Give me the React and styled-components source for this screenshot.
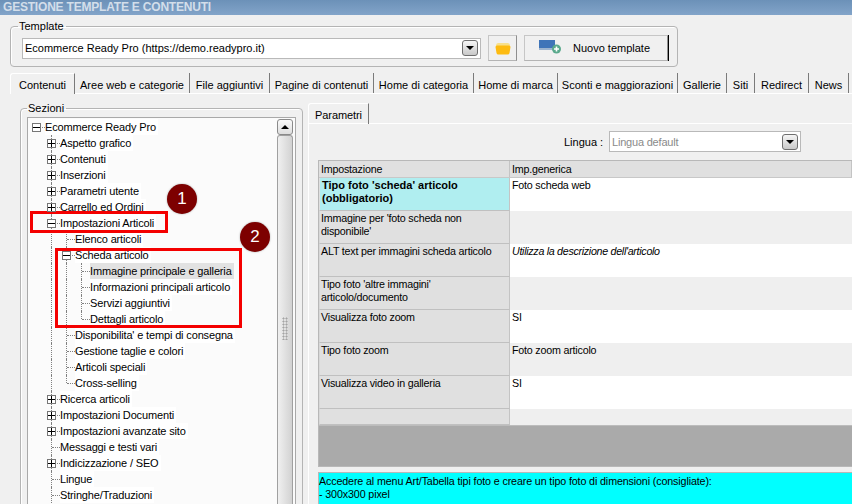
import React from 'react';
import styled, { createGlobalStyle } from 'styled-components';

const GlobalStyle = createGlobalStyle`
  html, body {
    margin: 0;
    padding: 0;
    background: #f0f0f0;
  }
  body {
    width: 852px;
    height: 504px;
    overflow: hidden;
    font-family: "Liberation Sans", Arial, sans-serif;
    font-size: 11px;
    color: #000;
  }
`;

const Page = styled.div`
  position: relative;
  width: 852px;
  height: 504px;
  overflow: hidden;
  display: flex;
  flex-direction: column;
`;

const TitleBar = styled.div`
  height: 15px;
  flex: none;
  padding-left: 3px;
  background: linear-gradient(#6c91b8, #82a4c9);
  color: #d3deea;
  font-weight: bold;
  font-size: 12px;
  line-height: 15px;
  letter-spacing: -0.2px;
  white-space: nowrap;
`;

const Group = styled.fieldset`
  margin: 0;
  min-width: 0;
  border: 1px solid #b4b4b4;
  border-radius: 4px;
  box-shadow: 1px 1px 0 #fff inset;
`;

const Legend = styled.legend`
  padding: 0 2px 0 1px;
  margin-left: ${p => p.$offset}px;
  line-height: 13px;
`;

const TemplateGroup = styled(Group)`
  width: 668px;
  height: 47px;
  box-sizing: border-box;
  margin: 5px 0 0 10px;
  padding: 2px 0 0 11px;
  flex: none;
`;

const TemplateRow = styled.div`
  display: flex;
  align-items: center;
  height: 26px;
`;

const ComboBox = styled.div`
  box-sizing: border-box;
  display: flex;
  align-items: center;
  justify-content: space-between;
  width: ${p => p.$width}px;
  height: ${p => p.$height}px;
  background: #fff;
  border: 1px solid #b9b9b9;
  padding: 0 2px 0 ${p => p.$pad}px;
  color: ${p => p.$muted ? '#8a8a8a' : '#000'};
  letter-spacing: ${p => p.$muted ? '-0.2px' : '0'};
  white-space: nowrap;
`;

const ComboButton = styled.span`
  box-sizing: border-box;
  width: 16px;
  height: 16px;
  flex: none;
  display: flex;
  align-items: center;
  justify-content: center;
  border: 1px solid #6f6f6f;
  border-radius: 3px;
  background: linear-gradient(#f6f6f6, #c9c9c9);
  &::after {
    content: '';
    border: 4px solid transparent;
    border-top: 4px solid #000;
    border-bottom: 0;
  }
`;

const ToolButton = styled.button`
  box-sizing: border-box;
  height: 26px;
  width: ${p => p.$width}px;
  margin-left: 7px;
  padding: 0;
  display: flex;
  align-items: center;
  justify-content: ${p => p.$text ? 'flex-start' : 'center'};
  background: #f0f0f0;
  font: inherit;
  color: #000;
  border: 1px solid #c6c6c6;
  border-right: 1px solid #8f8f8f;
  border-bottom: 1px solid #b4b4b4;
  white-space: nowrap;
`;

const NewTemplateWrap = styled.div`
  display: flex;
  align-items: center;
  border-right: 1px solid #000;
  height: 26px;
`;

const NewIcon = styled.svg`
  width: 22px;
  height: 14px;
  margin: -3px 12px 0 14px;
  flex: none;
`;

const TabStrip = styled.div`
  display: flex;
  height: 20px;
  flex: none;
  margin: 6px 0 0 10px;
`;

const Tab = styled.div`
  box-sizing: border-box;
  width: ${p => p.$width}px;
  flex: none;
  height: 21px;
  padding-top: ${p => p.$active ? 4 : 5}px;
  text-align: center;
  line-height: 15px;
  white-space: nowrap;
  background: #f0f0f0;
  border-right: 1px solid #7a7a7a;
  ${p => p.$active && `
    border-top: 1px solid #fff;
    border-left: 1px solid #fff;
    border-radius: 3px 0 0 0;
    z-index: 1;
  `}
`;

const TabBody = styled.div`
  flex: 1;
  min-height: 0;
  display: flex;
  margin-left: 10px;
  border-top: 1px solid #fff;
  padding: 8px 0 0 10px;
`;

const SectionsGroup = styled(Group)`
  box-sizing: border-box;
  width: 283px;
  height: 420px;
  flex: none;
  padding: 2px 6px 0;
`;

const TreeBox = styled.div`
  display: flex;
  height: 400px;
  background: #fbfbfb;
  border: 1px solid #a9a9a9;
  padding: 1px 2px 0 0;
`;

const Tree = styled.div`
  flex: 1;
  min-width: 0;
  padding-left: 2px;
`;

const TreeRow = styled.div`
  display: flex;
  height: 16px;
  align-items: stretch;
`;

const Cell = styled.span`
  position: relative;
  width: 15px;
  flex: none;
  ${p => p.$line && `
    &::before {
      content: '';
      position: absolute;
      left: 6px;
      top: 0;
      bottom: ${p.$half ? '8px' : '0'};
      border-left: 1px dotted #808080;
    }
  `}
  ${p => p.$branch && `
    &::after {
      content: '';
      position: absolute;
      left: 7px;
      right: 0;
      top: 8px;
      border-top: 1px dotted #808080;
    }
  `}
`;

const Expander = styled.span`
  position: absolute;
  z-index: 1;
  box-sizing: border-box;
  left: 2px;
  top: 4px;
  width: 9px;
  height: 9px;
  background: #fff;
  border: 1px solid #777;
  &::before {
    content: '';
    position: absolute;
    left: 0;
    right: 0;
    top: 3px;
    border-top: 1px solid #000;
  }
  ${p => p.$closed && `
    &::after {
      content: '';
      position: absolute;
      top: 0;
      bottom: 0;
      left: 3px;
      border-left: 1px solid #000;
    }
  `}
`;

const TreeLabel = styled.span`
  line-height: 17px;
  height: 16px;
  padding-right: 2px;
  letter-spacing: -0.15px;
  white-space: nowrap;
  background: ${p => p.$selected ? '#e2e2e2' : '#fff'};
`;

const ScrollBar = styled.div`
  width: 16px;
  flex: none;
  display: flex;
  flex-direction: column;
`;

const ScrollUp = styled.div`
  box-sizing: border-box;
  height: 16px;
  flex: none;
  display: flex;
  align-items: center;
  justify-content: center;
  border: 1px solid #8a8a8a;
  border-radius: 3px;
  background: linear-gradient(#fafafa, #dedede);
  &::after {
    content: '';
    border: 4px solid transparent;
    border-bottom: 4px solid #000;
    border-top: 0;
  }
`;

const ScrollThumb = styled.div`
  flex: 1;
  display: flex;
  align-items: flex-start;
  justify-content: center;
  padding-top: 181px;
  border: 1px solid #a0a0a0;
  border-bottom: 0;
  border-radius: 3px 3px 0 0;
  background: linear-gradient(90deg, #f0f0f0, #d2d2d2);
`;

const Grip = styled.div`
  width: 6px;
  height: 23px;
  background-image: radial-gradient(#a4a4a4 45%, transparent 50%);
  background-size: 3px 3px;
`;

const RightPane = styled.div`
  flex: 1;
  min-width: 0;
  display: flex;
  flex-direction: column;
  margin: 1px 0 0 5px;
`;

const InnerTabRow = styled.div`
  display: flex;
  height: 20px;
  flex: none;
  border-bottom: 1px solid #fff;
`;

const InnerTab = styled.div`
  box-sizing: border-box;
  width: 61px;
  height: 21px;
  padding-top: 4px;
  text-align: center;
  line-height: 15px;
  letter-spacing: -0.1px;
  border-top: 1px solid #fff;
  border-left: 1px solid #fff;
  border-right: 1px solid #7a7a7a;
  border-radius: 3px 0 0 0;
`;

const InnerBody = styled.div`
  flex: 1;
  min-height: 0;
  display: flex;
  flex-direction: column;
  border-left: 1px solid #fff;
  padding-left: 9px;
`;

const LanguageRow = styled.div`
  display: flex;
  align-items: center;
  height: 21px;
  flex: none;
  margin-top: 7px;
  padding-left: 246px;
`;

const LanguageLabel = styled.span`
  width: 45px;
  white-space: nowrap;
`;

const Grid = styled.div`
  margin-top: 8px;
  flex: none;
  border: 1px solid #b8b8b8;
  border-right: 0;
  display: flex;
  flex-direction: column;
  font-size: 10.7px;
  letter-spacing: -0.2px;
`;

const GridRow = styled.div`
  display: grid;
  grid-template-columns: 191px 1fr;
  height: ${p => p.$height}px;
  background: ${p => p.$alt ? '#efefef' : '#fff'};
`;

const NameCell = styled.div`
  box-sizing: border-box;
  padding: 1px 0 0 ${p => p.$required ? 2 : 1}px;
  line-height: 13px;
  background: ${p => p.$required ? '#b0eef0' : '#e0e0e0'};
  font-weight: ${p => p.$required ? 'bold' : 'normal'};
  font-size: ${p => p.$required ? '11px' : 'inherit'};
  letter-spacing: ${p => p.$required ? '0' : 'inherit'};
  border-left: 1px solid ${p => p.$required ? '#e0e0e0' : '#d8d8d8'};
  border-right: 1px solid #c4c4c4;
  border-bottom: 1px solid #c0c0c0;
`;

const ValueCell = styled.div`
  padding: 1px 0 0 2px;
  line-height: 13px;
  font-style: ${p => p.$italic ? 'italic' : 'normal'};
  letter-spacing: ${p => p.$italic ? '-0.3px' : 'inherit'};
`;

const HeaderRow = styled(GridRow)`
  background: #e0e0e0;
  border-bottom: 1px solid #c8c8c8;
  line-height: 16px;
`;

const HeaderCell = styled.div`
  padding-left: 2px;
  border-right: 1px solid #c4c4c4;
`;

const EmptyArea = styled.div`
  height: 40px;
  background: #aaaaaa;
  border-top: 1px solid #bcbcbc;
`;

const HelpBox = styled.div`
  flex: none;
  height: 40px;
  margin-top: 5px;
  padding: 2px 0 0 0;
  line-height: 13px;
  font-size: 10.7px;
  letter-spacing: -0.12px;
  background: #00ffff;
  border: 1px solid #b8b8b8;
  border-right: 0;
  white-space: nowrap;
`;

const Highlight = styled.div`
  position: absolute;
  box-sizing: border-box;
  left: ${p => p.$x}px;
  top: ${p => p.$y}px;
  width: ${p => p.$w}px;
  height: ${p => p.$h}px;
  border: 3px solid #f40000;
`;

const Marker = styled.div`
  position: absolute;
  left: ${p => p.$x}px;
  top: ${p => p.$y}px;
  width: 30px;
  height: 30px;
  border-radius: 50%;
  background: #7d0000;
  box-shadow: 0 0 2px rgba(0, 0, 0, 0.35);
  color: #fff;
  font-size: 17px;
  line-height: 30px;
  text-align: center;
`;

const tabs = [
  ['Contenuti', 65, true],
  ['Aree web e categorie', 115],
  ['File aggiuntivi', 80],
  ['Pagine di contenuti', 104],
  ['Home di categoria', 100],
  ['Home di marca', 84],
  ['Sconti e maggiorazioni', 120],
  ['Gallerie', 49],
  ['Siti', 28],
  ['Redirect', 54],
  ['News', 40],
];

// cells: what each indent column draws before the label
const treeRows = [
  { label: 'Ecommerce Ready Pro', cells: [{ exp: 'open' }] },
  { label: 'Aspetto grafico', cells: [{}, { exp: 'closed', line: true }] },
  { label: 'Contenuti', cells: [{}, { exp: 'closed', line: true }] },
  { label: 'Inserzioni', cells: [{}, { exp: 'closed', line: true }] },
  { label: 'Parametri utente', cells: [{}, { exp: 'closed', line: true }] },
  { label: 'Carrello ed Ordini', cells: [{}, { exp: 'closed', line: true }] },
  { label: 'Impostazioni Articoli', cells: [{}, { exp: 'open', line: true }] },
  { label: 'Elenco articoli', cells: [{}, { line: true, pass: true }, { line: true }] },
  { label: 'Scheda articolo', cells: [{}, { line: true, pass: true }, { exp: 'open', line: true }] },
  { label: 'Immagine principale e galleria', selected: true, cells: [{}, { line: true, pass: true }, { line: true, pass: true }, { line: true }] },
  { label: 'Informazioni principali articolo', cells: [{}, { line: true, pass: true }, { line: true, pass: true }, { line: true }] },
  { label: 'Servizi aggiuntivi', cells: [{}, { line: true, pass: true }, { line: true, pass: true }, { line: true }] },
  { label: 'Dettagli articolo', cells: [{}, { line: true, pass: true }, { line: true, pass: true }, { line: true, half: true }] },
  { label: "Disponibilita' e tempi di consegna", cells: [{}, { line: true, pass: true }, { line: true }] },
  { label: 'Gestione taglie e colori', cells: [{}, { line: true, pass: true }, { line: true }] },
  { label: 'Articoli speciali', cells: [{}, { line: true, pass: true }, { line: true }] },
  { label: 'Cross-selling', cells: [{}, { line: true, pass: true }, { line: true, half: true }] },
  { label: 'Ricerca articoli', cells: [{}, { exp: 'closed', line: true }] },
  { label: 'Impostazioni Documenti', cells: [{}, { exp: 'closed', line: true }] },
  { label: 'Impostazioni avanzate sito', cells: [{}, { exp: 'closed', line: true }] },
  { label: 'Messaggi e testi vari', cells: [{}, { line: true }] },
  { label: 'Indicizzazione / SEO', cells: [{}, { exp: 'closed', line: true }] },
  { label: 'Lingue', cells: [{}, { line: true }] },
  { label: 'Stringhe/Traduzioni', cells: [{}, { line: true }] },
];

const params = [
  { name: "Tipo foto 'scheda' articolo (obbligatorio)", value: 'Foto scheda web', required: true },
  { name: "Immagine per 'foto scheda non disponibile'", alt: true },
  { name: 'ALT text per immagini scheda articolo', value: "Utilizza la descrizione dell'articolo", italic: true },
  { name: "Tipo foto 'altre immagini' articolo/documento", alt: true },
  { name: 'Visualizza foto zoom', value: 'SI' },
  { name: 'Tipo foto zoom', value: 'Foto zoom articolo', alt: true },
  { name: 'Visualizza video in galleria', value: 'SI' },
];

function FolderIcon() {
  return (
    <svg width="16" height="13" viewBox="0 0 16 13">
      <path d="M1 3.5 Q1 1 3 1 H13 Q15 1 15 3.5 V4 H1 Z" fill="#f7e08c" />
      <path d="M0.5 5 Q0.5 3.5 2 3.5 H14 Q15.5 3.5 15.5 5 L14.5 11 Q14.3 12.5 12.5 12.5 H3.5 Q1.7 12.5 1.5 11 Z" fill="#fdbb11" />
    </svg>
  );
}

function NewTemplateIcon() {
  return (
    <NewIcon viewBox="0 0 22 14">
      <rect x="0" y="0" width="16" height="8" fill="#3f74b8" />
      <rect x="0" y="8" width="16" height="2" fill="#9db4cf" />
      <circle cx="17.5" cy="9" r="4.5" fill="#5aa98c" />
      <path d="M15 9 H20 M17.5 6.5 V11.5" stroke="#fff" strokeWidth="1.6" />
    </NewIcon>
  );
}

export default function App() {
  return (
    <Page>
      <GlobalStyle />
      <TitleBar>GESTIONE TEMPLATE E CONTENUTI</TitleBar>

      <TemplateGroup>
        <Legend $offset={-4}>Template</Legend>
        <TemplateRow>
          <ComboBox $width={459} $height={21} $pad={2}>
            Ecommerce Ready Pro (https://demo.readypro.it)
            <ComboButton />
          </ComboBox>
          <ToolButton $width={29}><FolderIcon /></ToolButton>
          <NewTemplateWrap>
            <ToolButton $width={144} $text><NewTemplateIcon />Nuovo template</ToolButton>
          </NewTemplateWrap>
        </TemplateRow>
      </TemplateGroup>

      <TabStrip>
        {tabs.map(([label, width, active]) => (
          <Tab key={label} $width={width} $active={active}>{label}</Tab>
        ))}
      </TabStrip>

      <TabBody>
        <SectionsGroup>
          <Legend $offset={0}>Sezioni</Legend>
          <TreeBox>
            <Tree>
              {treeRows.map(row => (
                <TreeRow key={row.label}>
                  {row.cells.map((cell, i) => (
                    <Cell key={i} $line={cell.line} $half={cell.half} $branch={!cell.pass && i === row.cells.length - 1}>
                      {cell.exp && <Expander $closed={cell.exp === 'closed'} />}
                    </Cell>
                  ))}
                  <TreeLabel $selected={row.selected}>{row.label}</TreeLabel>
                </TreeRow>
              ))}
            </Tree>
            <ScrollBar>
              <ScrollUp />
              <ScrollThumb><Grip /></ScrollThumb>
            </ScrollBar>
          </TreeBox>
        </SectionsGroup>

        <RightPane>
          <InnerTabRow><InnerTab>Parametri</InnerTab></InnerTabRow>
          <InnerBody>
            <LanguageRow>
              <LanguageLabel>Lingua :</LanguageLabel>
              <ComboBox $width={192} $height={21} $pad={2} $muted>
                Lingua default
                <ComboButton />
              </ComboBox>
            </LanguageRow>
            <Grid>
              <HeaderRow $height={16}>
                <HeaderCell>Impostazione</HeaderCell>
                <HeaderCell>Imp.generica</HeaderCell>
              </HeaderRow>
              {params.map(p => (
                <GridRow key={p.name} $height={33} $alt={p.alt}>
                  <NameCell $required={p.required}>{p.name}</NameCell>
                  <ValueCell $italic={p.italic}>{p.value}</ValueCell>
                </GridRow>
              ))}
              <GridRow $height={16} $alt>
                <NameCell />
                <ValueCell />
              </GridRow>
              <EmptyArea />
            </Grid>
            <HelpBox>
              <div>Accedere al menu Art/Tabella tipi foto e creare un tipo foto di dimensioni (consigliate):</div>
              <div>- 300x300 pixel</div>
            </HelpBox>
          </InnerBody>
        </RightPane>
      </TabBody>

      <Highlight $x={30} $y={211} $w={138} $h={22} />
      <Highlight $x={55} $y={248} $w={187} $h={80} />
      <Marker $x={167} $y={184}>1</Marker>
      <Marker $x={240} $y={222}>2</Marker>
    </Page>
  );
}
